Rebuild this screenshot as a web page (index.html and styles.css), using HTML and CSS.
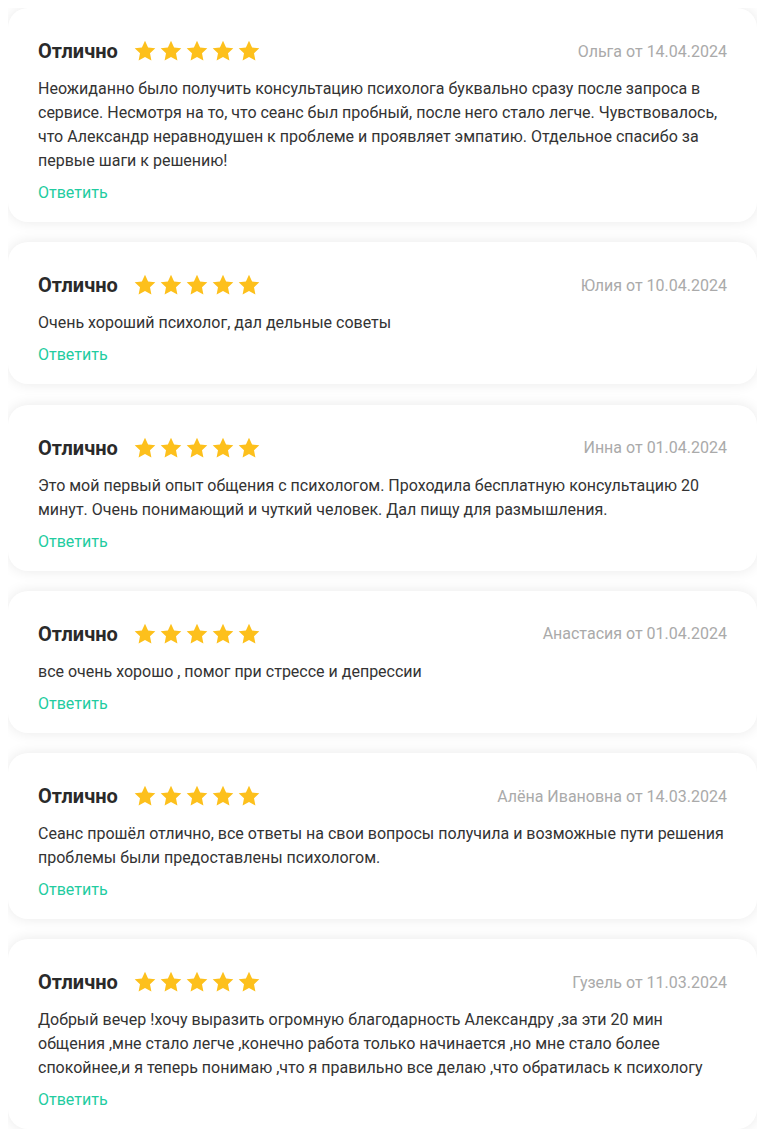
FILE: index.html
```html
<!DOCTYPE html>
<html lang="ru">
<head>
<meta charset="utf-8">
<link rel="stylesheet" href="styles.css">
</head>
<body>
<svg width="0" height="0" class="defs">
  <defs>
    <symbol id="star" viewBox="0 0 24 24">
      <path d="M12 1.8l3.1 6.6 7.2.9-5.3 5 1.4 7.1L12 17.9l-6.4 3.5 1.4-7.1-5.3-5 7.2-.9z"/>
    </symbol>
  </defs>
</svg>
<div class="reviews">
  <div class="card">
    <div class="head">
      <div class="rating"><span class="title">Отлично</span>
        <span class="stars"><svg><use href="#star"/></svg><svg><use href="#star"/></svg><svg><use href="#star"/></svg><svg><use href="#star"/></svg><svg><use href="#star"/></svg></span></div>
      <div class="author">Ольга от 14.04.2024</div>
    </div>
    <p class="text">Неожиданно было получить консультацию психолога буквально сразу после запроса в сервисе. Несмотря на то, что сеанс был пробный, после него стало легче. Чувствовалось, что Александр неравнодушен к проблеме и проявляет эмпатию. Отдельное спасибо за первые шаги к решению!</p>
    <a class="reply">Ответить</a>
  </div>
  <div class="card">
    <div class="head">
      <div class="rating"><span class="title">Отлично</span>
        <span class="stars"><svg><use href="#star"/></svg><svg><use href="#star"/></svg><svg><use href="#star"/></svg><svg><use href="#star"/></svg><svg><use href="#star"/></svg></span></div>
      <div class="author">Юлия от 10.04.2024</div>
    </div>
    <p class="text">Очень хороший психолог, дал дельные советы</p>
    <a class="reply">Ответить</a>
  </div>
  <div class="card">
    <div class="head">
      <div class="rating"><span class="title">Отлично</span>
        <span class="stars"><svg><use href="#star"/></svg><svg><use href="#star"/></svg><svg><use href="#star"/></svg><svg><use href="#star"/></svg><svg><use href="#star"/></svg></span></div>
      <div class="author">Инна от 01.04.2024</div>
    </div>
    <p class="text">Это мой первый опыт общения с психологом. Проходила бесплатную консультацию 20 минут. Очень понимающий и чуткий человек. Дал пищу для размышления.</p>
    <a class="reply">Ответить</a>
  </div>
  <div class="card">
    <div class="head">
      <div class="rating"><span class="title">Отлично</span>
        <span class="stars"><svg><use href="#star"/></svg><svg><use href="#star"/></svg><svg><use href="#star"/></svg><svg><use href="#star"/></svg><svg><use href="#star"/></svg></span></div>
      <div class="author">Анастасия от 01.04.2024</div>
    </div>
    <p class="text">все очень хорошо , помог при стрессе и депрессии</p>
    <a class="reply">Ответить</a>
  </div>
  <div class="card">
    <div class="head">
      <div class="rating"><span class="title">Отлично</span>
        <span class="stars"><svg><use href="#star"/></svg><svg><use href="#star"/></svg><svg><use href="#star"/></svg><svg><use href="#star"/></svg><svg><use href="#star"/></svg></span></div>
      <div class="author">Алёна Ивановна от 14.03.2024</div>
    </div>
    <p class="text">Сеанс прошёл отлично, все ответы на свои вопросы получила и возможные пути решения проблемы были предоставлены психологом.</p>
    <a class="reply">Ответить</a>
  </div>
  <div class="card">
    <div class="head">
      <div class="rating"><span class="title">Отлично</span>
        <span class="stars"><svg><use href="#star"/></svg><svg><use href="#star"/></svg><svg><use href="#star"/></svg><svg><use href="#star"/></svg><svg><use href="#star"/></svg></span></div>
      <div class="author">Гузель от 11.03.2024</div>
    </div>
    <p class="text">Добрый вечер !хочу выразить огромную благодарность Александру ,за эти 20 мин общения ,мне стало легче ,конечно работа только начинается ,но мне стало более спокойнее,и я теперь понимаю ,что я правильно все делаю ,что обратилась к психологу</p>
    <a class="reply">Ответить</a>
  </div>
</div>
</body>
</html>
```
FILE: styles.css
```css
body {
  margin: 8px;
  background: #fff;
  font-family: Roboto, "Liberation Sans", sans-serif;
  color: #333;
}
.defs { position: absolute; }
.reviews {
  display: flex;
  flex-direction: column;
  gap: 20.3px;
}
.card {
  background: #fff;
  border-radius: 20px;
  box-shadow: 0 0 14px rgba(0, 0, 0, 0.09);
  padding: 29px 30px 17px 30px;
}
.head {
  display: flex;
  justify-content: space-between;
  align-items: center;
  height: 28px;
}
.rating {
  display: flex;
  align-items: center;
}
.title {
  font-size: 20px;
  font-weight: 700;
  color: #2a2a2a;
}
.stars {
  display: flex;
  gap: 2px;
  margin-left: 15px;
}
.stars svg {
  width: 24px;
  height: 24px;
  fill: #fdc01c;
}
.author {
  font-size: 16px;
  color: #aaa;
}
.text {
  margin: 12px 0 0;
  font-size: 16px;
  line-height: 24px;
  color: #333;
}
.reply {
  display: block;
  margin-top: 8px;
  font-size: 16px;
  line-height: 24px;
  color: #22cca0;
  cursor: pointer;
}
```
